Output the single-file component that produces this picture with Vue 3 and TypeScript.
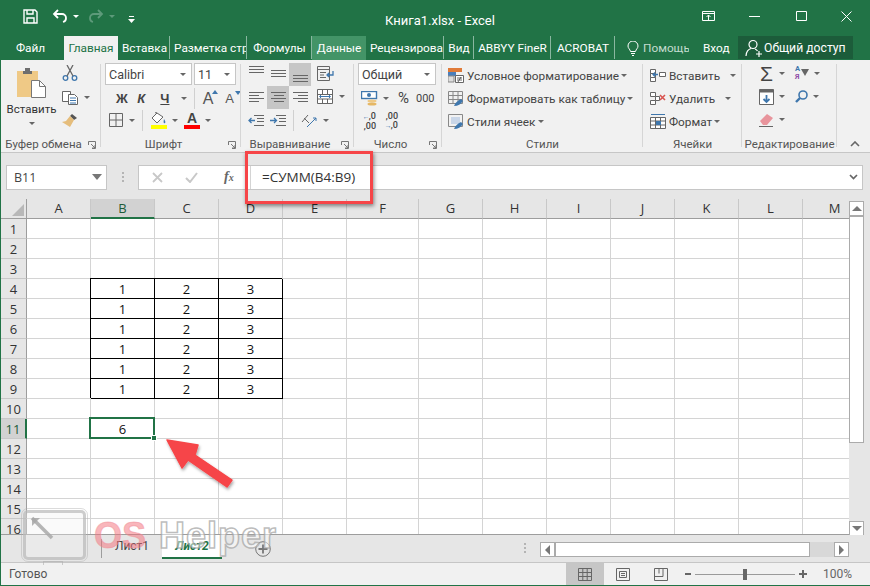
<script setup lang="ts">
const tabs = [
  { label: 'Главная', w: 54, cls: 'tab--active' },
  { label: 'Вставка', w: 52, sep: true },
  { label: 'Разметка стр', w: 77, sep: true },
  { label: 'Формулы', w: 65, sep: true },
  { label: 'Данные', w: 54, cls: 'tab--hover' },
  { label: 'Рецензирова', w: 78, sep: true },
  { label: 'Вид', w: 30, sep: true },
  { label: 'ABBYY FineR', w: 77, sep: true },
  { label: 'ACROBAT', w: 64, sep: true },
]

const columns = [
  { name: 'A', w: 64 },
  { name: 'B', w: 64, active: true },
  { name: 'C', w: 64 },
  { name: 'D', w: 64 },
  { name: 'E', w: 64 },
  { name: 'F', w: 72 },
  { name: 'G', w: 64 },
  { name: 'H', w: 64 },
  { name: 'I', w: 64 },
  { name: 'J', w: 64 },
  { name: 'K', w: 64 },
  { name: 'L', w: 64 },
  { name: 'M', w: 64 },
]
const gridTemplate = '26px ' + columns.map(c => c.w + 'px').join(' ')
const rows = Array.from({ length: 16 }, (_, i) => i + 1)

function cellValue(row: number, col: number) {
  if (row >= 4 && row <= 9 && col >= 1 && col <= 3) return String(col)
  if (row === 11 && col === 1) return '6'
  return ''
}
function isBoxed(row: number, col: number) {
  return row >= 4 && row <= 9 && col >= 1 && col <= 3
}
</script>

<template>
  <div class="window">
    <header class="titlebar">
      <div class="qat">
        <svg class="qat-save" width="15" height="15" viewBox="0 0 15 15" fill="none" stroke="#fff" stroke-width="1.4">
          <path d="M1 1h11l2 2v11H1z" /><path d="M4 1v4h6V1M4 14V9h7v5" />
        </svg>
        <svg class="qat-undo" width="16" height="14" viewBox="0 0 16 14" fill="none" stroke="#fff" stroke-width="1.8">
          <path d="M6 1 2 5l4 4" /><path d="M2 5h8a4 4 0 0 1 4 4 4 4 0 0 1-3 4" />
        </svg>
        <i class="caret caret--white"></i>
        <svg class="qat-redo" width="16" height="14" viewBox="0 0 16 14" fill="none" stroke="#5d9a7a" stroke-width="1.8">
          <path d="m10 1 4 4-4 4" /><path d="M14 5H6a4 4 0 0 0-4 4 4 4 0 0 0 3 4" />
        </svg>
        <i class="caret caret--dim"></i>
        <svg class="qat-more" width="7" height="7" viewBox="0 0 7 7" fill="#fff"><path d="M1 0h5v1H1zM0 3h7L3.500 7z" /></svg>
      </div>
      <div class="doc-title">Книга1.xlsx - Excel</div>
      <div class="win-btns">
        <svg width="13" height="11" viewBox="0 0 13 11" fill="none" stroke="#fff"><path d="M.5.500h12v9H.5zM.5 2.500h12M6.500 9V4M4.500 6l2-2 2 2" /></svg>
        <svg class="win-min" width="11" height="1" viewBox="0 0 11 1"><path d="M0 0h11v1H0z" fill="#fff" /></svg>
        <svg class="win-max" width="11" height="10" viewBox="0 0 11 10" fill="none" stroke="#fff"><path d="M.5.500h10v9H.5z" /></svg>
        <svg class="win-close" width="11" height="11" viewBox="0 0 11 11" stroke="#fff"><path d="m.5.500 10 10M10.500.500l-10 10" /></svg>
      </div>
    </header>

    <nav class="tabs">
      <span class="tab-file">Файл</span>
      <span
        v-for="t in tabs"
        :key="t.label"
        class="tab"
        :class="[t.cls, { 'tab--sep': t.sep }]"
        :style="{ width: t.w + 'px' }"
      ><span class="tab-clip">{{ t.label }}</span></span>
      <svg class="tab-bulb" width="12" height="15" viewBox="0 0 12 15" fill="none" stroke="#fff"><path d="M3.500 10.500C3 8 1 7.500 1 5a5 5 0 0 1 10 0c0 2.500-2 3-2.500 5.500zM4 12.500h4M5 14.500h2" /></svg>
      <span class="tab-help">Помощь</span>
      <span class="tab-login">Вход</span>
      <span class="tab-share">
        <svg width="18" height="18" viewBox="0 0 18 18" fill="none" stroke="#fff" stroke-width="1.2"><circle cx="8" cy="5.500" r="4" /><path d="M1 17c0-4 2.500-7 5-7.500M10 10c1 .3 2 1 2.500 2M11 15h6M14 12v6" /></svg>
        Общий доступ
      </span>
    </nav>

    <section class="ribbon">
      <!-- clipboard -->
      <div class="group group--clip">
        <div class="group-body clip-body">
          <div class="paste">
            <svg width="29" height="30" viewBox="0 0 29 30">
              <rect x="0" y="3" width="21" height="26" fill="#efc986" />
              <path d="M6 3h9v3H6zM8 0h5v3H8z" fill="#6e6e6e" />
              <path d="M14.500 12.500h8l6 6v11h-14z" fill="#fff" stroke="#777" />
              <path d="M22.500 12.500v6h6" fill="none" stroke="#777" />
            </svg>
            <span class="paste-label">Вставить</span>
            <i class="caret"></i>
          </div>
          <div class="clip-tools">
            <svg width="16" height="16" viewBox="0 0 16 16" fill="none" stroke="#3f77ad" stroke-width="1.3">
              <circle cx="3.500" cy="13" r="2.300" /><circle cx="12.500" cy="13" r="2.300" />
              <path d="M5 11 11 0M11 11 5 0" stroke="#666" />
            </svg>
            <div class="clip-copy">
              <svg width="16" height="15" viewBox="0 0 16 15" fill="#fff" stroke="#666">
                <path d="M.5 1.500h8v10h-8z" /><path d="M6.500 4.500h6l3 3v7h-9z" /><path d="M8 8h6M8 10.500h6M8 13h6" stroke="#3f77ad" />
              </svg>
              <i class="caret"></i>
            </div>
            <svg width="16" height="16" viewBox="0 0 16 16">
              <path d="M10 1l5 4-3 2-4-4z" fill="#555" /><path d="M8 3l4 4-4 7-8-5 4-1z" fill="#e5bd7c" />
            </svg>
          </div>
        </div>
        <div class="group-label group-label--launch">Буфер обмена<svg class="launcher" width="8" height="8" viewBox="0 0 8 8" fill="none" stroke="#777"><path d="M.5 4V.500H7.500V7.500H4M3 3l4 4M7 4v3H4" /></svg></div>
      </div>

      <!-- font -->
      <div class="group group--font">
        <div class="group-body font-body">
          <div class="font-row">
            <div class="combo combo--name">Calibri<i class="caret"></i></div>
            <div class="combo combo--size">11<i class="caret"></i></div>
          </div>
          <div class="font-row font-row--b">
            <b class="fmt fmt-b">Ж</b>
            <b class="fmt fmt-i">К</b>
            <b class="fmt fmt-u">Ч</b>
            <i class="caret"></i>
            <span class="vsep"></span>
            <span class="grow-a">A<i class="tri tri--up"></i></span>
            <span class="grow-a grow-a--small">A<i class="tri tri--down"></i></span>
          </div>
          <div class="font-row font-row--c">
            <svg width="14" height="14" viewBox="0 0 14 14" fill="none" stroke="#666"><path d="M.5.500h13v13H.5zM7 .500v13M.5 7h13" /></svg>
            <i class="caret"></i>
            <span class="vsep"></span>
            <span class="paint">
              <svg width="16" height="13" viewBox="0 0 16 13" fill="#fff" stroke="#666"><path d="M6 1 1 6l5 5 6-6zM4 1l2-1" /><path d="M13 7c1 2 2 3 1 4s-2 0-1-4z" fill="#3f77ad" stroke="none" /></svg>
              <i class="paint-bar paint-bar--yellow"></i>
            </span>
            <i class="caret"></i>
            <span class="paint paint--a">
              <b class="paint-a">A</b>
              <i class="paint-bar paint-bar--red"></i>
            </span>
            <i class="caret"></i>
          </div>
        </div>
        <div class="group-label group-label--launch">Шрифт<svg class="launcher" width="8" height="8" viewBox="0 0 8 8" fill="none" stroke="#777"><path d="M.5 4V.500H7.500V7.500H4M3 3l4 4M7 4v3H4" /></svg></div>
      </div>

      <!-- alignment -->
      <div class="group group--align">
        <div class="group-body align-body">
          <div class="align-grid">
            <span class="al al--top"><svg width="15" height="10" viewBox="0 0 15 10" stroke="#666"><path d="M0 .500h15M0 3.500h15M0 6.500h15" /></svg></span>
            <span class="al al--mid"><svg width="15" height="10" viewBox="0 0 15 10" stroke="#666"><path d="M0 .500h15M0 3.500h15M0 6.500h15" /></svg></span>
            <span class="al al--on al--low"><svg width="15" height="10" viewBox="0 0 15 10" stroke="#666"><path d="M0 .500h15M0 3.500h15M0 6.500h15" /></svg></span>
            <span class="al"><svg width="15" height="11" viewBox="0 0 15 11" stroke="#666"><path d="M0 .500h15M0 3.500h10M0 6.500h15M0 9.500h10" /></svg></span>
            <span class="al al--on"><svg width="15" height="11" viewBox="0 0 15 11" stroke="#666"><path d="M0 .500h15M3 3.500h10M0 6.500h15M3 9.500h10" /></svg></span>
            <span class="al"><svg width="15" height="11" viewBox="0 0 15 11" stroke="#666"><path d="M0 .500h15M5 3.500h10M0 6.500h15M5 9.500h10" /></svg></span>
          </div>
          <div class="align-side">
            <svg width="18" height="15" viewBox="0 0 18 15" fill="none" stroke="#666"><path d="M.5.500h12v14H.5zM.5 3.500h12M3 6.500h6M3 9h4M3 11.500h6" /><path d="M16 5v4h-6M12 7l-2 2 2 2" stroke="#3f77ad" stroke-width="1.300" /></svg>
            <div class="align-merge">
              <svg width="16" height="15" viewBox="0 0 16 15" fill="#fff" stroke="#666"><path d="M.5.500h15v14H.5zM.5 5.500h15M.5 10h15M5.500.500v5M10.500.500v5M5.500 10v4.500M10.500 10v4.500" /><path d="M3 7.500h10M4 6l-1.500 1.500L4 9M12 6l1.500 1.500L12 9" stroke="#3f77ad" fill="none" /></svg>
              <i class="caret"></i>
            </div>
          </div>
          <div class="align-row3">
            <svg width="16" height="11" viewBox="0 0 16 11" fill="none" stroke="#3f77ad" stroke-width="1.300"><path d="M7 5.500H1M3.500 3 1 5.500 3.500 8" /><path d="M6 .500h10M9 3.500h7M9 6.500h7M6 10.500h10" stroke="#666" stroke-width="1" /></svg>
            <svg width="16" height="11" viewBox="0 0 16 11" fill="none" stroke="#3f77ad" stroke-width="1.300"><path d="M0 5.500h6M4 3l2.500 2.500L4 8" /><path d="M6 .500h10M9 3.500h7M9 6.500h7M6 10.500h10" stroke="#666" stroke-width="1" /></svg>
            <span class="vsep"></span>
            <svg width="16" height="15" viewBox="0 0 16 15" fill="none" stroke="#666"><path d="m1 9 6-7M3 5l5 5" /><path d="M6 14 15 5M15 5h-3M15 5v3" stroke="#3f77ad" /></svg>
            <i class="caret"></i>
          </div>
        </div>
        <div class="group-label group-label--launch">Выравнивание<svg class="launcher" width="8" height="8" viewBox="0 0 8 8" fill="none" stroke="#777"><path d="M.5 4V.500H7.500V7.500H4M3 3l4 4M7 4v3H4" /></svg></div>
      </div>

      <!-- number -->
      <div class="group group--num">
        <div class="group-body num-body">
          <div class="combo combo--num">Общий<i class="caret"></i></div>
          <div class="num-row">
            <svg width="17" height="15" viewBox="0 0 17 15"><rect x=".5" y=".5" width="15" height="7" fill="#fff" stroke="#3f77ad" stroke-width="1.400" /><circle cx="8" cy="4" r="2" fill="#3f77ad" /><ellipse cx="11" cy="10" rx="4.500" ry="1.500" fill="#efc986" /><ellipse cx="11" cy="13" rx="4.500" ry="1.500" fill="#e5b765" /></svg>
            <i class="caret"></i>
            <span class="num-pct">%</span>
            <span class="num-000">000</span>
          </div>
          <div class="num-row num-row--c">
            <span class="dec"><i>←</i>,0<br />,00</span>
            <span class="dec">,00<br /><i>→</i>,0</span>
          </div>
        </div>
        <div class="group-label group-label--launch">Число<svg class="launcher" width="8" height="8" viewBox="0 0 8 8" fill="none" stroke="#777"><path d="M.5 4V.500H7.500V7.500H4M3 3l4 4M7 4v3H4" /></svg></div>
      </div>

      <!-- styles -->
      <div class="group group--styles">
        <div class="group-body list-body">
          <div class="list-item">
            <svg width="16" height="15" viewBox="0 0 16 15"><path d="M0 0h14v4H0z" fill="#e07b39" /><path d="M0 4h8v4H0z" fill="#4a7ebb" /><path d="M0 8h6v6H0z" fill="#ddd" stroke="#888" /><path d="M7.500 7.500h8v7h-8z" fill="#fff" stroke="#666" /><path d="M9 10h5M9 12h5M10 14l3-5" stroke="#444" stroke-width=".8" /></svg>
            <span>Условное форматирование</span><i class="caret caret--tight"></i>
          </div>
          <div class="list-item">
            <svg width="16" height="16" viewBox="0 0 16 16" fill="none" stroke="#888"><path d="M.5.500h14v12H.5zM.5 4.500h14M.5 8.500h14M5 .500v12M10 .500v12" /><path d="M6 15c1-3 3-5 7-7l2 2c-2 3-5 5-9 5z" fill="#3f77ad" stroke="none" /></svg>
            <span>Форматировать как таблицу</span><i class="caret caret--tight"></i>
          </div>
          <div class="list-item">
            <svg width="16" height="16" viewBox="0 0 16 16" fill="none" stroke="#888"><path d="M.5.500h14v12H.5z" /><path d="M3 3h9v7H3z" fill="#c9d6e8" stroke="none" /><path d="M6 15c1-3 3-5 7-7l2 2c-2 3-5 5-9 5z" fill="#3f77ad" stroke="none" /></svg>
            <span>Стили ячеек</span><i class="caret caret--tight"></i>
          </div>
        </div>
        <div class="group-label">Стили</div>
      </div>

      <!-- cells -->
      <div class="group group--cells">
        <div class="group-body list-body">
          <div class="list-item">
            <svg width="16" height="16" viewBox="0 0 16 16" fill="#fff" stroke="#666"><path d="M.5 1.500h5v4h-5zM.5 5.500h5v4h-5zM.5 9.500h5v4h-5zM9.500 4.500h6v4h-6z" /><path d="M8 6.500H3M5 4.500l-2 2 2 2" stroke="#3f77ad" stroke-width="1.300" fill="none" /></svg>
            <span>Вставить</span><i class="caret caret--gap12"></i>
          </div>
          <div class="list-item">
            <svg width="16" height="16" viewBox="0 0 16 16" fill="#fff" stroke="#666"><path d="M.5 1.500h5v4h-5zM.5 9.500h5v4h-5zM5.500 5.500h4v4h-4z" /><path d="m10 4 5 5M15 4l-5 5" stroke="#d9534f" stroke-width="1.600" fill="none" /></svg>
            <span>Удалить</span><i class="caret caret--gap12"></i>
          </div>
          <div class="list-item">
            <svg width="16" height="17" viewBox="0 0 16 17" fill="#fff" stroke="#666"><path d="M1 1.500h14" stroke="#3f77ad" /><path d="M.5 4.500h15v11H.5zM.5 8h15M.5 12h15M5.500 4.500v11M10.500 4.500v11" /><path d="M6 8h5v4H6z" fill="#3f77ad" stroke="none" /></svg>
            <span>Формат</span><i class="caret caret--tight"></i>
          </div>
        </div>
        <div class="group-label">Ячейки</div>
      </div>

      <!-- editing -->
      <div class="group group--edit">
        <div class="group-body edit-body">
          <div class="edit-row">
            <span class="sigma">Σ</span><i class="caret"></i>
            <span class="sort"><b>А</b><b class="sort-b">Я</b><i class="tri tri--funnel"></i></span><i class="caret"></i>
          </div>
          <div class="edit-row">
            <svg width="15" height="16" viewBox="0 0 15 16" fill="#fff" stroke="#666"><path d="M.5.500h14v15H.5z" /><path d="M.5 2h14" stroke-width="3" /><path d="M7.500 6v7M4.500 10l3 3 3-3" fill="none" stroke="#3f77ad" stroke-width="1.800" /></svg>
            <i class="caret"></i>
            <svg class="edit-find" width="13" height="13" viewBox="0 0 13 13" fill="none" stroke="#3f77ad" stroke-width="1.600"><circle cx="8" cy="5" r="4" /><path d="m5 8-4 4" stroke-width="2.400" /></svg>
            <i class="caret"></i>
          </div>
          <div class="edit-row">
            <svg width="15" height="14" viewBox="0 0 15 14"><path d="M1 8 8 1l6 4-6 7H4z" fill="#e8949c" /><path d="M0 13.500h14" stroke="#666" /></svg>
            <i class="caret"></i>
          </div>
        </div>
        <div class="group-label">Редактирование</div>
      </div>

      <svg class="collapse" width="10" height="6" viewBox="0 0 10 6" fill="none" stroke="#666" stroke-width="1.600"><path d="m1 5 4-4 4 4" /></svg>
    </section>

    <section class="formula">
      <div class="namebox">B11<i class="caret caret--big"></i></div>
      <div class="dots"><i></i><i></i><i></i></div>
      <div class="fx-input">
        <div class="fx-btns">
          <svg width="11" height="11" viewBox="0 0 11 11" stroke="#c8c8c8" stroke-width="1.800"><path d="m1 1 9 9M10 1l-9 9" /></svg>
          <svg width="13" height="11" viewBox="0 0 13 11" fill="none" stroke="#c8c8c8" stroke-width="2"><path d="m1 6 4 4 7-9" /></svg>
          <span class="fx-label">f<small>x</small></span>
        </div>
        <div class="fx-text">=СУММ(B4:B9)</div>
        <svg class="fx-expand" width="9" height="6" viewBox="0 0 9 6" fill="none" stroke="#666" stroke-width="1.700"><path d="m1 1 3.500 3.500L8 1" /></svg>
      </div>
    </section>

    <section class="sheet-area">
      <div class="grid" :style="{ gridTemplateColumns: gridTemplate }">
        <div class="corner"><i></i></div>
        <div
          v-for="c in columns"
          :key="c.name"
          class="col-head"
          :class="{ 'col-head--active': c.active }"
        >{{ c.name }}</div>
        <template v-for="r in rows" :key="r">
          <div class="row-head" :class="{ 'row-head--active': r === 11 }">{{ r }}</div>
          <div
            v-for="(c, ci) in columns"
            :key="c.name"
            class="cell"
            :class="{ 'cell--boxed': isBoxed(r, ci) }"
          >
            {{ cellValue(r, ci) }}
            <span v-if="r === 11 && ci === 1" class="selection"><i></i></span>
          </div>
        </template>
      </div>
      <div class="vscroll">
        <span class="sb-btn"><i class="tri tri--sb-up"></i></span>
        <span class="vthumb"></span>
        <span class="sb-btn"><i class="tri tri--sb-down"></i></span>
      </div>
    </section>

    <section class="sheets">
      <span class="sheet-sep"></span>
      <span class="sheet-tab">Лист1</span>
      <span class="sheet-tab sheet-tab--on">Лист2</span>
      <span class="sheet-add">
        <svg width="16" height="16" viewBox="0 0 16 16" fill="none" stroke="#777"><circle cx="8" cy="8" r="7.300" /><path d="M8 3.500v9M3.500 8h9" stroke-width="1.800" /></svg>
      </span>
      <span class="h-dots"><i></i><i></i><i></i></span>
      <div class="hscroll">
        <span class="sb-btn"><i class="tri tri--sb-left"></i></span>
        <span class="hthumb"></span>
        <span class="sb-btn sb-btn--end"><i class="tri tri--sb-right"></i></span>
      </div>
    </section>

    <footer class="status">
      <span class="status-text">Готово</span>
      <span class="view view--on">
        <svg width="14" height="13" viewBox="0 0 14 13" fill="none" stroke="#666"><path d="M.5.500h13v12H.5zM.5 4.500h13M.5 8.500h13M4.800.500v12M9.200.500v12" /></svg>
      </span>
      <span class="view">
        <svg width="14" height="13" viewBox="0 0 14 13" fill="none" stroke="#666"><path d="M.5.500h13v12H.5zM3.500 3.500h7v6h-7zM5 5.500h4M5 7.500h4" /></svg>
      </span>
      <span class="view">
        <svg width="14" height="13" viewBox="0 0 14 13" fill="none" stroke="#666"><path d="M.5.500h13v12H.5zM.5 8.500H9V.500M5 .500v5" /></svg>
      </span>
      <div class="zoom">
        <i class="zoom-minus"></i>
        <span class="zoom-track"><i></i></span>
        <i class="zoom-plus"></i>
        <span class="zoom-text">100%</span>
      </div>
    </footer>

    <!-- annotation layers drawn over the screenshot -->
    <div class="red-box"></div>
    <svg class="arrow" width="90" height="70" viewBox="0 0 90 70">
      <defs>
        <filter id="arrow-shadow" x="-20%" y="-20%" width="140%" height="140%">
          <feDropShadow dx="1" dy="2" stdDeviation="1.500" flood-color="#000" flood-opacity=".35" />
        </filter>
      </defs>
      <path
        d="M4 4 35 9 32 19 69 44 64 51 25 24 19 32z"
        fill="#f64548"
        stroke="#f64548"
        stroke-width="1.500"
        stroke-linejoin="round"
        filter="url(#arrow-shadow)"
      />
    </svg>

    <div class="watermark">
      <div class="wm-screen">
        <svg width="26" height="26" viewBox="0 0 26 26" fill="none" stroke="#a8a8a8" stroke-opacity=".85"><path d="M3 3 23 23" stroke-width="3.500" /><path d="M3 11V3h8z" fill="#a8a8a8" fill-opacity=".85" stroke="none" /></svg>
        <i class="wm-stand"></i>
      </div>
      <span class="wm-os">OS</span>
      <span class="wm-helper">Helper</span>
    </div>
  </div>
</template>

<style scoped>
.window {
  position: relative;
  width: 870px;
  height: 586px;
  overflow: hidden;
  box-sizing: border-box;
  padding: 0 0 1px 1px;
  background: #217346;
  display: flex;
  flex-direction: column;
  font-family: Roboto, "Open Sans", sans-serif;
  color: #444;
  font-size: 12px;
}
.window > * { flex-shrink: 0; }
i { font-style: normal; }

.caret {
  display: inline-block;
  width: 0;
  height: 0;
  border-left: 3.500px solid transparent;
  border-right: 3.500px solid transparent;
  border-top: 3.500px solid #666;
}
.caret--white { border-top-color: #fff; }
.caret--dim { border-top-color: #5d9a7a; }
.caret--big { border-left-width: 5px; border-right-width: 5px; border-top-width: 6px; border-top-color: #777; }

.tri { display: inline-block; width: 0; height: 0; }
.vsep { width: 1px; height: 21px; background: #d0d0d0; }

/* title bar */
.titlebar {
  height: 36px;
  display: flex;
  align-items: center;
  color: #fff;
}
.qat { display: flex; align-items: center; width: 384px; padding-bottom: 4px; }
.qat-save { margin-left: 22px; }
.qat-undo { margin-left: 14px; }
.qat .caret { margin-left: 5px; }
.qat-redo { margin-left: 9px; }
.qat-more { margin-left: 13px; margin-top: 6px; }
.doc-title { font-size: 13px; width: 317px; padding-top: 4px; }
.win-btns { display: flex; align-items: center; padding-bottom: 4px; }
.win-min { margin-left: 34px; margin-top: 1px; }
.win-max { margin-left: 36px; }
.win-close { margin-left: 34px; }

/* tabs */
.tabs {
  height: 24px;
  display: flex;
  align-items: center;
  color: #fff;
  font-size: 11.800px;
}
.tab-file { width: 63px; padding-left: 15px; box-sizing: border-box; }
.tab {
  height: 24px;
  box-sizing: border-box;
  display: flex;
  align-items: center;
  justify-content: center;
  position: relative;
}
.tab-clip { overflow: hidden; white-space: nowrap; padding: 0 4px; }
.tab--active { background: #f1f1f1; color: #217346; }
.tab--hover { background: #439467; }
.tab--sep::after {
  content: '';
  position: absolute;
  right: 0;
  top: 0;
  bottom: 1px;
  width: 1px;
  background: #8ab7a0;
}
.tab-bulb { margin-left: 12px; }
.tab-help {
  width: 46px;
  margin-left: 4px;
  margin-right: 14px;
  overflow: hidden;
  white-space: nowrap;
  color: #c4dccf;
}
.tab-login { width: 35px; }
.tab-share {
  width: 115px;
  height: 23px;
  margin-top: -1px;
  background: #1c5c3a;
  display: flex;
  align-items: center;
  gap: 1px;
  padding-left: 7px;
  box-sizing: border-box;
  white-space: nowrap;
  font-size: 12.200px;
}

/* ribbon */
.ribbon {
  height: 93px;
  background: #f1f1f1;
  border-bottom: 1px solid #c6c6c6;
  box-sizing: border-box;
  display: flex;
  position: relative;
}
.group {
  position: relative;
  display: flex;
  flex-direction: column;
  box-sizing: border-box;
}
.group::after {
  content: '';
  position: absolute;
  right: 0;
  top: 4px;
  bottom: 5px;
  width: 1px;
  background: #d6d6d6;
}
.group--clip { width: 100px; }
.group--font { width: 140px; }
.group--align { width: 113px; }
.group--num { width: 88px; }
.group--styles { width: 201px; }
.group--cells { width: 99px; }
.group--edit { width: 95px; }
.group-body { flex: 1; min-height: 0; }
.group-label {
  height: 15px;
  text-align: center;
  line-height: 15px;
  font-size: 11.500px;
  color: #555;
  position: relative;
  white-space: nowrap;
}
.group-label--launch { padding-right: 15px; }
.launcher { position: absolute; right: 5px; top: 4px; }

/* clipboard */
.clip-body { display: flex; }
.paste {
  width: 61px;
  display: flex;
  flex-direction: column;
  align-items: center;
  padding-top: 8px;
  box-sizing: border-box;
  color: #333;
}
.paste-label { margin-top: 4px; font-size: 11.500px; }
.paste .caret { margin-top: 6px; }
.clip-tools {
  display: flex;
  flex-direction: column;
  gap: 8px;
  padding-top: 5px;
}
.clip-copy { display: flex; align-items: center; gap: 6px; height: 16px; }

/* font */
.font-body { padding: 3px 0 0 4px; }
.font-row { display: flex; align-items: center; }
.combo {
  height: 22px;
  box-sizing: border-box;
  background: #fff;
  border: 1px solid #c6c6c6;
  display: flex;
  align-items: center;
  justify-content: space-between;
  padding: 0 5px 0 3px;
  font-size: 12.500px;
  color: #444;
}
.combo--name { width: 87px; margin-right: 2px; }
.combo--size { width: 42px; }
.font-row--b { height: 21px; margin-top: 3px; padding-left: 7px; }
.fmt { font-size: 13px; width: 20px; text-align: center; color: #444; font-family: "Liberation Sans", sans-serif; }
.fmt-i { font-style: italic; }
.fmt-u { text-decoration: underline; margin-left: 4px; margin-right: 4px; }
.font-row--b .caret { margin-left: 2px; margin-right: 7px; }
.grow-a {
  font-size: 16px;
  margin-left: 8px;
  color: #555;
  position: relative;
  width: 16px;
  font-family: "Liberation Sans", sans-serif;
}
.grow-a--small { font-size: 13px; margin-left: 7px; }
.tri--up, .tri--down {
  position: absolute;
  top: 0;
  right: 0;
  border-left: 3px solid transparent;
  border-right: 3px solid transparent;
}
.tri--up { border-bottom: 4px solid #3f77ad; }
.tri--down { border-top: 4px solid #3f77ad; }
.font-row--c { height: 22px; padding-left: 4px; }
.font-row--c .caret { margin-left: 6px; margin-right: 7px; }
.font-row--c .caret + .vsep { margin-right: 8px; }
.font-row--c .paint + .caret { margin-left: 5px; margin-right: 6px; }
.paint { display: flex; flex-direction: column; align-items: center; width: 16px; }
.paint-a { font-size: 14px; line-height: 14px; font-family: "Liberation Sans", sans-serif; color: #444; }
.paint-bar { width: 16px; height: 4px; }
.paint-bar--yellow { background: #ff0; }
.paint-bar--red { background: #f00; }

/* alignment */
.align-body {
  display: grid;
  grid-template-columns: 66px 30px;
  grid-template-rows: 46px 22px;
  padding: 3px 0 0 4px;
}
.align-grid { display: grid; grid-template-columns: repeat(3, 22px); grid-template-rows: 23px 23px; }
.al { display: flex; justify-content: center; align-items: center; }
.al--on { background: #c6c6c6; }
.al--top, .al--mid, .al--low { align-items: flex-start; }
.al--top { padding-top: 3px; }
.al--mid { padding-top: 7px; }
.al--low { padding-top: 12px; }
.align-side {
  display: flex;
  flex-direction: column;
  gap: 8px;
  padding: 3px 0 0 6px;
}
.align-merge { display: flex; align-items: center; gap: 6px; width: 36px; }
.align-row3 {
  grid-column: 1 / 3;
  display: flex;
  align-items: center;
  padding-left: 3px;
  gap: 6px;
}
.align-row3 .vsep { margin: 0 1px; }
.align-row3 .caret { margin-left: 0; }

/* number */
.num-body { padding: 3px 0 0 4px; }
.combo--num { width: 78px; }
.num-row { display: flex; align-items: center; height: 22px; margin-top: 2px; padding-left: 3px; }
.num-row .caret { margin-left: 5px; }
.num-pct { font-size: 15px; margin-left: 9px; }
.num-000 { font-size: 11px; margin-left: 7px; }
.num-row--c { gap: 7px; margin-top: 1px; }
.dec {
  width: 15px;
  font-size: 9px;
  line-height: 9px;
  text-align: right;
  white-space: nowrap;
  font-weight: 500;
}
.dec i { color: #3f77ad; font-size: 7px; letter-spacing: -1px; }

/* lists */
.list-body { display: flex; flex-direction: column; padding: 4px 0 0 6px; }
.group--cells .list-body { padding-left: 7px; }
.list-item {
  height: 23px;
  display: flex;
  align-items: center;
  font-size: 11.800px;
  color: #444;
  white-space: nowrap;
}
.list-item svg { margin-right: 3px; flex: none; }
.caret--tight { margin-left: 2px; }
.caret--gap12 { margin-left: 10px; }

/* editing */
.edit-body { display: flex; flex-direction: column; padding: 2px 0 0 17px; }
.edit-row { height: 23px; display: flex; align-items: center; }
.edit-row .caret { margin-left: 5px; }
.sigma {
  width: 15px;
  font-size: 21px;
  line-height: 21px;
  font-family: "Liberation Sans", sans-serif;
  color: #444;
  text-align: center;
}
.edit-row > .sort { margin-left: 10px; }
.edit-find { margin-left: 10px; }
.sort {
  position: relative;
  width: 14px;
  height: 18px;
  display: block;
  font-size: 7.500px;
  line-height: 8px;
  color: #3f77ad;
}
.sort b { display: block; }
.sort-b { color: #8f4fa8; }
.tri--funnel {
  position: absolute;
  right: 0;
  top: 4px;
  border-left: 4px solid transparent;
  border-right: 4px solid transparent;
  border-top: 7px solid #666;
}
.collapse { position: absolute; right: 10px; top: 81px; }

/* formula bar */
.formula {
  height: 46px;
  background: #e6e6e6;
  display: flex;
  align-items: center;
  padding-top: 2px;
  box-sizing: border-box;
}
.namebox {
  width: 101px;
  height: 25px;
  margin-left: 5px;
  box-sizing: border-box;
  background: #fff;
  border: 1px solid #c6c6c6;
  display: flex;
  align-items: center;
  justify-content: space-between;
  padding: 0 4px 0 7px;
  font-family: "Open Sans", sans-serif;
  font-size: 12.500px;
}
.dots {
  width: 31px;
  display: flex;
  flex-direction: column;
  align-items: center;
  gap: 2px;
}
.dots i, .h-dots i { width: 2px; height: 2px; background: #b4b4b4; display: block; }
.fx-input {
  width: 725px;
  height: 25px;
  box-sizing: border-box;
  background: #fff;
  border: 1px solid #c6c6c6;
  display: flex;
  align-items: center;
}
.fx-btns {
  width: 112px;
  height: 100%;
  border-right: 1px solid #d4d4d4;
  box-sizing: border-box;
  display: flex;
  align-items: center;
  gap: 22px;
  padding-left: 13px;
}
.fx-label {
  font-family: "Liberation Serif", serif;
  font-style: italic;
  font-weight: 700;
  font-size: 14px;
  color: #666;
  margin-left: 4px;
}
.fx-label small { font-size: 10px; }
.fx-text {
  margin-left: 11px;
  font-family: "Open Sans", sans-serif;
  font-size: 13.500px;
  color: #333;
  flex: 1;
}
.fx-expand { margin-right: 4px; }

/* sheet */
.sheet-area {
  height: 336px;
  background: #e6e6e6;
  display: flex;
}
.grid {
  width: 848px;
  height: 336px;
  overflow: hidden;
  display: grid;
  grid-auto-rows: 20px;
  border-bottom: 1px solid #9d9d9d;
  box-sizing: border-box;
  background: #fff;
  font-family: "Open Sans", sans-serif;
  font-size: 13px;
  position: relative;
}
.corner {
  background: #e6e6e6;
  border-bottom: 1px solid #9d9d9d;
  border-right: 1px solid #9d9d9d;
  box-sizing: border-box;
  position: relative;
}
.corner i {
  position: absolute;
  right: 2px;
  bottom: 2px;
  border-left: 12px solid transparent;
  border-bottom: 12px solid #b8b8b8;
}
.col-head {
  background: #e6e6e6;
  border-bottom: 1px solid #9d9d9d;
  border-right: 1px solid #c8c8c8;
  box-sizing: border-box;
  text-align: center;
  line-height: 19px;
  color: #333;
}
.col-head--active {
  background: #d2d2d2;
  border-bottom: 2px solid #217346;
  color: #1d5c3a;
}
.row-head {
  background: #e6e6e6;
  border-bottom: 1px solid #c8c8c8;
  border-right: 1px solid #9d9d9d;
  box-sizing: border-box;
  text-align: center;
  line-height: 21px;
  color: #333;
}
.row-head--active {
  background: #d2d2d2;
  border-right: 2px solid #217346;
  color: #1d5c3a;
}
.cell {
  border-right: 1px solid #d4d4d4;
  border-bottom: 1px solid #d4d4d4;
  box-sizing: border-box;
  text-align: center;
  line-height: 21px;
  color: #111;
  position: relative;
  background: #fff;
}
.cell--boxed {
  border-color: #000;
  box-shadow: -1px -1px 0 #000;
  z-index: 1;
}
.selection {
  position: absolute;
  left: -2px;
  top: -2px;
  width: 66px;
  height: 22px;
  box-sizing: border-box;
  border: 2px solid #217346;
  z-index: 2;
}
.selection i {
  position: absolute;
  right: -4px;
  bottom: -4px;
  width: 6px;
  height: 6px;
  background: #217346;
  border: 1px solid #fff;
  box-sizing: border-box;
}

.vscroll {
  width: 21px;
  display: flex;
  flex-direction: column;
  align-items: center;
  padding: 2px 6px 0 0;
  box-sizing: border-box;
}
.sb-btn {
  width: 15px;
  height: 15px;
  flex: none;
  box-sizing: border-box;
  background: #fff;
  border: 1px solid #ababab;
  display: flex;
  align-items: center;
  justify-content: center;
}
.vthumb {
  width: 15px;
  height: 227px;
  flex: none;
  box-sizing: border-box;
  background: #fff;
  border: 1px solid #ababab;
  margin-bottom: 78px;
}
.tri--sb-up { border-left: 5px solid transparent; border-right: 5px solid transparent; border-bottom: 5px solid #777; }
.tri--sb-down { border-left: 5px solid transparent; border-right: 5px solid transparent; border-top: 5px solid #777; }
.tri--sb-left { border-top: 5px solid transparent; border-bottom: 5px solid transparent; border-right: 5px solid #777; }
.tri--sb-right { border-top: 5px solid transparent; border-bottom: 5px solid transparent; border-left: 5px solid #777; }

/* sheet tabs */
.sheets {
  height: 28px;
  background: #e6e6e6;
  display: flex;
  align-items: flex-start;
  border-bottom: 1px solid #c6c6c6;
  box-sizing: border-box;
}
.sheet-sep { width: 1px; height: 19px; background: #9d9d9d; margin: 4px 0 0 100px; }
.sheet-tab {
  width: 60px;
  height: 24px;
  line-height: 23px;
  text-align: center;
  font-size: 12px;
  color: #444;
  box-sizing: border-box;
}
.sheet-tab--on {
  background: #fff;
  color: #217346;
  font-weight: 700;
  font-style: italic;
  border-bottom: 2px solid #217346;
}
.sheet-add { margin: 6px 0 0 33px; }
.h-dots { display: flex; flex-direction: column; gap: 2px; margin: 8px 0 0 auto; }
.hscroll {
  width: 309px;
  height: 15px;
  margin: 7px 21px 0 14px;
  display: flex;
  background: #d8d8d8;
}
.hthumb {
  width: 255px;
  background: #fff;
  border: 1px solid #ababab;
  box-sizing: border-box;
}
.sb-btn--end { margin-left: auto; }

/* status bar */
.status {
  flex: 1;
  background: #f1f1f1;
  display: flex;
  align-items: center;
  font-size: 12px;
}
.status-text { width: 565px; padding-left: 8px; box-sizing: border-box; color: #555; }
.view {
  width: 38px;
  height: 100%;
  display: flex;
  align-items: center;
  justify-content: center;
}
.view--on { background: #c6c6c6; }
.zoom { display: flex; align-items: center; margin-left: 5px; }
.zoom-minus { width: 6px; height: 2px; background: #666; }
.zoom-track {
  width: 100px;
  height: 1px;
  margin: 0 4px;
  background: #9a9a9a;
  position: relative;
}
.zoom-track i {
  position: absolute;
  left: 48px;
  top: -5px;
  width: 4px;
  height: 11px;
  background: #666;
}
.zoom-plus {
  width: 8px;
  height: 2px;
  background: #666;
  position: relative;
}
.zoom-plus::after {
  content: '';
  position: absolute;
  left: 3px;
  top: -3px;
  width: 2px;
  height: 8px;
  background: #666;
}
.zoom-text { margin-left: 16px; color: #666; }

/* overlays */
.red-box {
  position: absolute;
  left: 245px;
  top: 151px;
  width: 128px;
  height: 53px;
  box-sizing: border-box;
  border: 3px solid #f64548;
  box-shadow: 1px 2px 4px rgba(0, 0, 0, .45);
}
.arrow { position: absolute; left: 163px; top: 436px; }
.watermark {
  position: absolute;
  left: 23px;
  top: 510px;
  width: 270px;
  height: 56px;
  pointer-events: none;
}
.wm-screen {
  position: absolute;
  left: 0;
  top: 0;
  width: 63px;
  height: 50px;
  box-sizing: border-box;
  border: 3px solid rgba(175, 175, 175, .6);
  outline: 1px solid rgba(175, 175, 175, .45);
  outline-offset: 1px;
  border-radius: 5px;
  background: rgba(240, 240, 240, .35);
  padding: 2px 0 0 3px;
}
.wm-stand {
  position: absolute;
  left: 17px;
  top: 48px;
  width: 20px;
  height: 4px;
  border: 1px solid rgba(175, 175, 175, .6);
  border-bottom: 0;
  box-sizing: border-box;
}
.wm-os,
.wm-helper {
  position: absolute;
  top: 8px;
  font-family: "Liberation Sans", sans-serif;
  font-weight: 700;
  font-size: 36px;
  line-height: 36px;
}
.wm-os {
  left: 71px;
  color: rgba(244, 110, 120, .5);
  -webkit-text-stroke: 1px rgba(240, 140, 150, .5);
}
.wm-helper {
  left: 136px;
  letter-spacing: 1px;
  color: rgba(255, 255, 255, .5);
  -webkit-text-stroke: 1.500px rgba(160, 160, 160, .7);
}
</style>

<style>
html, body { margin: 0; padding: 0; background: #217346; }
</style>
